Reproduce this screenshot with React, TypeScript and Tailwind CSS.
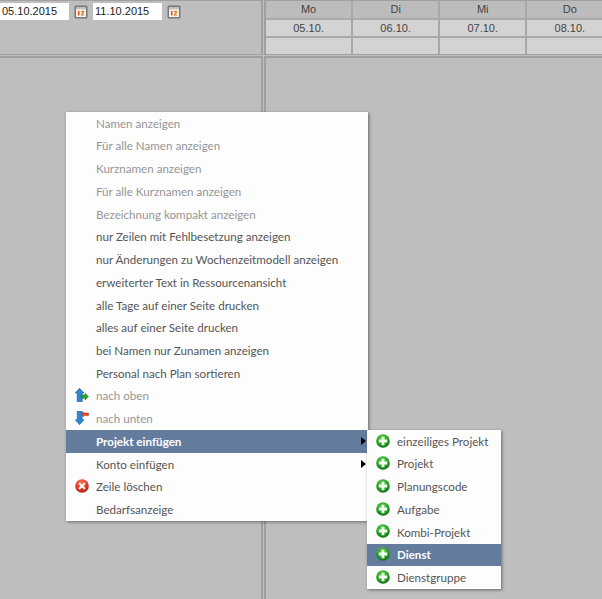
import React from 'react';

const topItems: { label: string; disabled?: boolean }[] = [
  { label: 'Namen anzeigen', disabled: true },
  { label: 'Für alle Namen anzeigen', disabled: true },
  { label: 'Kurznamen anzeigen', disabled: true },
  { label: 'Für alle Kurznamen anzeigen', disabled: true },
  { label: 'Bezeichnung kompakt anzeigen', disabled: true },
  { label: 'nur Zeilen mit Fehlbesetzung anzeigen' },
  { label: 'nur Änderungen zu Wochenzeitmodell anzeigen' },
  { label: 'erweiterter Text in Ressourcenansicht' },
  { label: 'alle Tage auf einer Seite drucken' },
  { label: 'alles auf einer Seite drucken' },
  { label: 'bei Namen nur Zunamen anzeigen' },
  { label: 'Personal nach Plan sortieren' },
];

const subItems = ['einzeiliges Projekt', 'Projekt', 'Planungscode', 'Aufgabe', 'Kombi-Projekt', 'Dienst', 'Dienstgruppe'];

const days = [
  { day: 'Mo', date: '05.10.' },
  { day: 'Di', date: '06.10.' },
  { day: 'Mi', date: '07.10.' },
  { day: 'Do', date: '08.10.' },
];

const CalendarIcon = () => (
  <svg width="14" height="14" viewBox="0 0 14 14" className="shrink-0">
    <rect x="0.5" y="0.5" width="13" height="13" rx="1.5" fill="#77777f" />
    <rect x="2" y="2.5" width="10" height="9.5" fill="#f4f1e8" />
    <rect x="2" y="2.5" width="10" height="2" fill="#c9c5bb" />
    <rect x="4" y="6" width="1.5" height="4.5" fill="#e8501c" />
    <path d="M7 6h3v1.4L8.2 9.5H10v1H7V9.4L8.8 7.1H7z" fill="#e8701c" />
  </svg>
);

const PlusIcon = () => (
  <svg width="14" height="14" viewBox="0 0 14 14" className="shrink-0">
    <defs>
      <radialGradient id="greenBall" cx="0.45" cy="0.3" r="0.8">
        <stop offset="0" stopColor="#5fd04e" />
        <stop offset="0.6" stopColor="#1f9a22" />
        <stop offset="1" stopColor="#0a5a10" />
      </radialGradient>
    </defs>
    <circle cx="7" cy="7" r="6.8" fill="url(#greenBall)" />
    <path d="M5.6 2.8h2.8v2.8h2.8v2.8H8.4v2.8H5.6V8.4H2.8V5.6h2.8z" fill="#f4fff0" />
  </svg>
);

const DeleteIcon = () => (
  <svg width="14" height="14" viewBox="0 0 14 14" className="shrink-0">
    <defs>
      <radialGradient id="redBall" cx="0.45" cy="0.3" r="0.8">
        <stop offset="0" stopColor="#f57a60" />
        <stop offset="0.6" stopColor="#dd3520" />
        <stop offset="1" stopColor="#8e1a10" />
      </radialGradient>
    </defs>
    <circle cx="7" cy="7" r="6.8" fill="url(#redBall)" />
    <path d="M4.6 4.6l4.8 4.8M9.4 4.6l-4.8 4.8" stroke="#fff" strokeWidth="2" strokeLinecap="round" />
  </svg>
);

const UpIcon = () => (
  <svg width="14" height="14" viewBox="0 0 14 14" className="shrink-0">
    <path d="M4.5 0.3L9 5H7.2V13.7H2.2V5H0.3z" fill="#2f86d6" stroke="#1a5a9c" strokeWidth="0.6" />
    <path d="M6 8.5L9.5 5.2V7H13.5V10.2H9.5V12z" transform="scale(-1 1) translate(-19.5 0)" fill="#2aa52c" stroke="#146b18" strokeWidth="0.5" />
  </svg>
);

const DownIcon = () => (
  <svg width="14" height="14" viewBox="0 0 14 14" className="shrink-0">
    <path d="M2.2 0.3H7.2V8.8H9L4.5 13.7L0.3 8.8H2.2z" fill="#2f86d6" stroke="#1a5a9c" strokeWidth="0.6" />
    <path d="M6 3.2L8.5 1V2H13.5V4.6H8.5V5.6z" fill="#e0492c" stroke="#9c2a18" strokeWidth="0.5" />
  </svg>
);

const MenuRow = ({ label, icon, disabled, active, arrow }: { label: string; icon?: React.ReactNode; disabled?: boolean; active?: boolean; arrow?: boolean }) => (
  <div className={`relative flex h-[22.74px] items-center whitespace-nowrap pl-[30px] text-[11.6px] ${active ? 'bg-[#647c9e] font-bold text-white' : disabled ? 'text-[#969696]' : 'text-[#555555]'}`}>
    {icon && <span className="absolute left-[9px] top-[3.5px]">{icon}</span>}
    {label}
    {arrow && <span className="absolute right-[2px] top-[7px] h-0 w-0 border-y-[4px] border-l-[5px] border-y-transparent border-l-black" />}
  </div>
);

export default function App() {
  return (
    <div className="relative h-[599px] w-[602px] overflow-hidden bg-[#bebebe] font-['Liberation_Sans',sans-serif]">
      <div className="flex h-[55px]">
        <div className="flex h-full w-[263px] shrink-0 items-start gap-[5px] border-y border-r-2 border-[#a0a0a0] pt-[2px]">
          <div className="flex h-[17px] w-[69px] items-center bg-white pl-[2px] text-[11px] text-[#222222]">05.10.2015</div>
          <div className="mt-[2px]"><CalendarIcon /></div>
          <div className="flex h-[17px] w-[69px] items-center bg-white pl-[2px] text-[11px] text-[#222222]">11.10.2015</div>
          <div className="mt-[2px]"><CalendarIcon /></div>
        </div>
        <div className="ml-[1px] flex flex-1 border-y border-l-2 border-[#a0a0a0]">
          {days.map((d) => (
            <div key={d.day} className="w-[87.1px] shrink-0 border-r-2 border-[#a8a8a8] text-[11px] text-[#444444]">
              <div className="flex h-[17px] items-center justify-center bg-[#bcbcbc]">{d.day}</div>
              <div className="flex h-[18px] items-center justify-center border-t-2 border-[#aaaaaa] bg-[#d3d3d3]">{d.date}</div>
              <div className="h-[18px] border-t-2 border-[#aaaaaa] bg-[#d3d3d3]" />
            </div>
          ))}
        </div>
      </div>
      <div className="mt-[1px] flex h-[543px]">
        <div className="h-full w-[263px] border-t-2 border-r-2 border-[#a0a0a0]" />
        <div className="ml-[1px] h-full flex-1 border-t-2 border-l-2 border-[#a0a0a0]" />
      </div>

      <div className="absolute left-[66px] top-[112px] w-[302px] bg-[#fdfdfd] font-['Lato',sans-serif] shadow-[1px_1px_3px_rgba(0,0,0,0.45)]">
        {topItems.map((it) => (
          <MenuRow key={it.label} label={it.label} disabled={it.disabled} />
        ))}
        <MenuRow label="nach oben" icon={<UpIcon />} disabled />
        <MenuRow label="nach unten" icon={<DownIcon />} disabled />
        <MenuRow label="Projekt einfügen" active arrow />
        <MenuRow label="Konto einfügen" arrow />
        <MenuRow label="Zeile löschen" icon={<DeleteIcon />} />
        <MenuRow label="Bedarfsanzeige" />
      </div>

      <div className="absolute left-[367px] top-[430px] w-[134px] bg-[#fdfdfd] font-['Lato',sans-serif] shadow-[1px_1px_3px_rgba(0,0,0,0.45)]">
        {subItems.map((s) => (
          <MenuRow key={s} label={s} icon={<PlusIcon />} active={s === 'Dienst'} />
        ))}
      </div>
    </div>
  );
}
